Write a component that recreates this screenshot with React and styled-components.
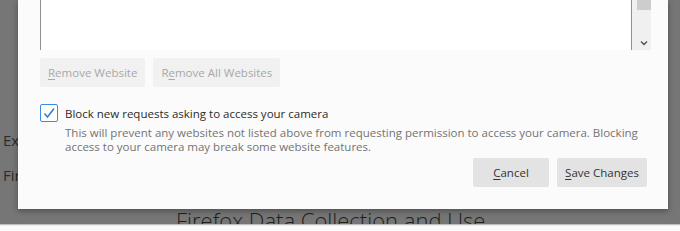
import React from "react";
import styled, { createGlobalStyle } from "styled-components";

const GlobalStyle = createGlobalStyle`
  html, body {
    margin: 0;
    padding: 0;
  }
  body {
    font-family: "Open Sans", "Noto Sans", sans-serif;
  }
`;

const Screen = styled.div`
  position: relative;
  width: 680px;
  height: 231px;
  overflow: hidden;
  background: #767676;
`;

// the preferences page behind the dialog, dimmed
const Backdrop = styled.div`
  display: flex;
  flex-direction: column;
  height: 100%;
`;

const BackRow = styled.div`
  width: 15px;
  height: 35px;
  padding-left: 3px;
  overflow: hidden;
  white-space: nowrap;
  font-size: 15px;
  color: #2a2a2a;
  display: flex;
  align-items: center;
`;

const BackSpacer = styled.div`
  height: ${(p) => p.$h}px;
`;

const BackHeading = styled.div`
  padding-left: 176px;
  height: 18px;
  overflow: hidden;
  font-size: 22px;
  font-weight: 300;
  line-height: 28px;
  color: #1f1f1f;
  white-space: nowrap;
`;

const BottomStrip = styled.div`
  flex: 1;
  border-top: 1px solid #bdbdbd;
  box-shadow: inset 0 1px 0 #ececec;
  background: #fafafa;
`;

const Dialog = styled.div`
  position: absolute;
  left: 18px;
  top: 0;
  width: 650px;
  height: 209px;
  box-sizing: border-box;
  background: #fbfbfb;
  box-shadow: 0 2px 6px rgba(0, 0, 0, 0.35);
  padding: 0 17px 0 22px;
  display: flex;
  flex-direction: column;
  color: #333;
`;

const ListBox = styled.div`
  height: 50px;
  display: flex;
`;

const ListBody = styled.div`
  flex: 1;
  background: #fff;
  border-left: 1px solid #8f8f8f;
  border-right: 1px solid #8f8f8f;
`;

const Scrollbar = styled.div`
  width: 19px;
  background: #f0f0f0;
  display: flex;
  flex-direction: column;
  align-items: center;
  padding-left: 4px;
  box-sizing: border-box;
`;

const Thumb = styled.div`
  width: 14px;
  height: 10px;
  background: #cdcdcd;
`;

const ArrowWrap = styled.div`
  margin-top: 30px;
  display: flex;
  color: #505050;
`;

const Row = styled.div`
  display: flex;
  gap: 8px;
  justify-content: ${(p) => (p.$end ? "flex-end" : "flex-start")};
  margin-top: ${(p) => p.$top}px;
  padding-right: ${(p) => p.$right || 0}px;
`;

const Button = styled.button`
  height: 29px;
  padding: 0 8px;
  min-width: ${(p) => p.$min || 0}px;
  border: none;
  border-radius: 2px;
  background: ${(p) => (p.disabled ? "#f1f1f1" : "#e3e3e3")};
  color: ${(p) => (p.disabled ? "#a8a8a8" : "#333")};
  font-family: "Open Sans", "Noto Sans", sans-serif;
  font-size: 11.5px;
  cursor: default;
`;

const Key = styled.span`
  text-decoration: underline;
  text-underline-offset: 2px;
`;

const CheckRow = styled.label`
  display: flex;
  align-items: center;
  gap: 7px;
  margin-top: 17px;
  font-size: 11.5px;
  color: #2b2b2b;
`;

const Box = styled.span`
  width: 18px;
  height: 18px;
  box-sizing: border-box;
  border: 1px solid #3b8be0;
  border-radius: 2px;
  background: #fff;
  display: flex;
  align-items: center;
  justify-content: center;
`;

const Description = styled.p`
  margin: 4px 0 0 25px;
  font-size: 11.5px;
  line-height: 14px;
  color: #737373;
`;

export default function App() {
  return (
    <>
      <GlobalStyle />
      <Screen>
        <Backdrop>
          <BackSpacer $h={122} />
          <BackRow>Extensions</BackRow>
          <BackRow>Firefox Home</BackRow>
          <BackSpacer $h={14} />
          <BackHeading>Firefox Data Collection and Use</BackHeading>
          <BottomStrip />
        </Backdrop>

        <Dialog>
          <ListBox>
            <ListBody />
            <Scrollbar>
              <Thumb />
              <ArrowWrap>
                <svg width="8" height="6" viewBox="0 0 8 6">
                  <path
                    d="M1 1.5 L4 4.5 L7 1.5"
                    fill="none"
                    stroke="currentColor"
                    strokeWidth="1.4"
                  />
                </svg>
              </ArrowWrap>
            </Scrollbar>
          </ListBox>

          <Row $top={8}>
            <Button disabled>
              <Key>R</Key>emove Website
            </Button>
            <Button disabled>
              R<Key>e</Key>move All Websites
            </Button>
          </Row>

          <CheckRow>
            <Box>
              <svg width="14" height="14" viewBox="0 0 14 14">
                <path
                  d="M2.5 7.5 L5.5 11 L12 2.5"
                  fill="none"
                  stroke="#2f7fd6"
                  strokeWidth="1.5"
                />
              </svg>
            </Box>
            Block new requests asking to access your camera
          </CheckRow>
          <Description>
            This will prevent any websites not listed above from requesting
            permission to access your camera. Blocking access to your camera
            may break some website features.
          </Description>

          <Row $end $top={4} $right={4}>
            <Button $min={76}>
              <Key>C</Key>ancel
            </Button>
            <Button $min={90}>
              <Key>S</Key>ave Changes
            </Button>
          </Row>
        </Dialog>
      </Screen>
    </>
  );
}
